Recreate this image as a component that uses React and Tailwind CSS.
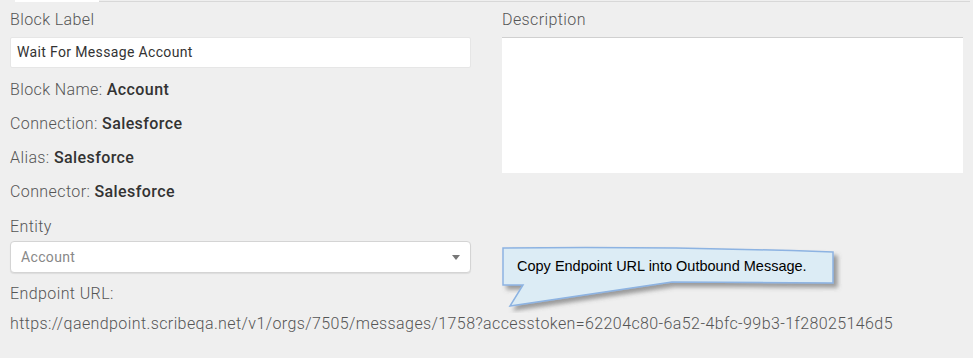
export default function App() {
  const font = { fontFamily: "Roboto, 'Noto Sans', sans-serif" };
  return (
    <div className="relative w-[973px] h-[358px] bg-[#efefef] overflow-hidden text-[#555]" style={font}>
      <div className="flex h-[3px]">
        <div className="w-[15px]" />
        <div className="w-[84px] h-[2px] bg-white" />
        <div className="w-[871px] mt-[1px] border-t border-[#d8d8d8]" />
      </div>
      <div className="flex gap-[31px] px-[10px] pt-[6px]">
        <div className="w-[461px] flex flex-col">
          <div className="h-[20px] leading-[22px] text-[16px] tracking-[0.4px] font-light text-[#555]">Block Label</div>
          <div className="mt-[8px] h-[31px] bg-white border border-[#e6e6e6] rounded-[2px] flex items-center px-[6px] text-[14px] tracking-[0.35px] text-[#333]">
            Wait For Message Account
          </div>
          <div className="mt-[4px] flex flex-col text-[16px] tracking-[0.4px]">
            <div className="h-[34px] leading-[36px]"><span className="font-light">Block Name: </span><span className="font-medium text-[#333]">Account</span></div>
            <div className="h-[34px] leading-[36px]"><span className="font-light">Connection: </span><span className="font-medium text-[#333]">Salesforce</span></div>
            <div className="h-[34px] leading-[36px]"><span className="font-light">Alias: </span><span className="font-medium text-[#333]">Salesforce</span></div>
            <div className="h-[34px] leading-[36px]"><span className="font-light">Connector: </span><span className="font-medium text-[#333]">Salesforce</span></div>
          </div>
          <div className="mt-[8px] h-[20px] leading-[22px] text-[16px] tracking-[0.4px] font-light">Entity</div>
          <div className="mt-[5px] h-[32px] bg-white border border-[#d4d4d4] rounded-[4px] shadow-[0_1px_1px_rgba(0,0,0,0.08)] flex items-center justify-between pl-[10px] pr-[10px] text-[14px] tracking-[0.35px] text-[#888]">
            <span>Account</span>
            <svg width="8" height="5" viewBox="0 0 8 5"><path d="M0 0 L8 0 L4 5 Z" fill="#777" /></svg>
          </div>
          <div className="mt-[10px] h-[20px] leading-[22px] text-[16px] tracking-[0.4px] font-light">Endpoint URL:</div>
          <div className="mt-[10px] h-[20px] leading-[22px] text-[16px] tracking-[0.4px] font-light whitespace-nowrap">
            https://qaendpoint.scribeqa.net/v1/orgs/7505/messages/1758?accesstoken=62204c80-6a52-4bfc-99b3-1f28025146d5
          </div>
        </div>
        <div className="w-[463px] flex flex-col">
          <div className="h-[20px] leading-[22px] text-[16px] tracking-[0.4px] font-light">Description</div>
          <div className="mt-[8px] h-[136px] bg-white border-t border-[#d0d0d0]" />
        </div>
      </div>
      <div className="absolute left-[498px] top-[243px] w-[345px] h-[70px]">
        <svg width="345" height="70" viewBox="0 0 345 70" className="absolute inset-0">
          <defs>
            <filter id="sh" x="-10%" y="-20%" width="130%" height="160%">
              <feDropShadow dx="4" dy="4" stdDeviation="2" floodColor="#555" floodOpacity="0.55" />
            </filter>
          </defs>
          <path d="M5 5 Q170 3 335 9 L335 40 L174 39 L12 63 L25 42 L5 42 Z" fill="#dcecf5" stroke="#8db3e2" strokeWidth="1.5" filter="url(#sh)" />
        </svg>
        <div className="absolute left-[19px] top-[15px] text-[14.5px] leading-[17px] text-black whitespace-nowrap" style={{ fontFamily: "'Liberation Sans', Arial, sans-serif" }}>
          Copy Endpoint URL into Outbound Message.
        </div>
      </div>
    </div>
  );
}
